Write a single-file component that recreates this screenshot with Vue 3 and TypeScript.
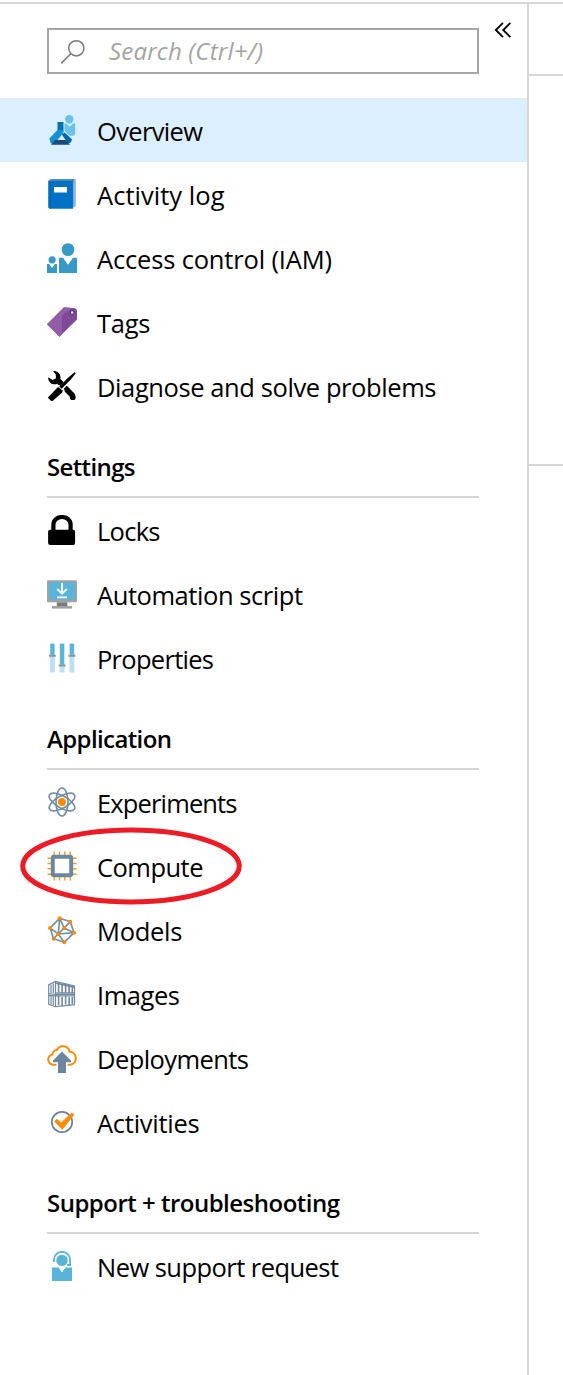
<script setup lang="ts">
import type { Directive } from 'vue'

interface MenuItem {
  icon: string
  label: string
  width: number
  active?: boolean
  circled?: boolean
}

interface MenuSection {
  title?: string
  width?: number
  items: MenuItem[]
}

const sections: MenuSection[] = [
  {
    items: [
      { icon: 'overview', label: 'Overview', width: 106, active: true },
      { icon: 'log', label: 'Activity log', width: 127.5 },
      { icon: 'iam', label: 'Access control (IAM)', width: 235 },
      { icon: 'tag', label: 'Tags', width: 53.5 },
      { icon: 'tools', label: 'Diagnose and solve problems', width: 339.5 },
    ],
  },
  {
    title: 'Settings',
    width: 88.5,
    items: [
      { icon: 'lock', label: 'Locks', width: 63.5 },
      { icon: 'script', label: 'Automation script', width: 206 },
      { icon: 'sliders', label: 'Properties', width: 117 },
    ],
  },
  {
    title: 'Application',
    width: 125,
    items: [
      { icon: 'atom', label: 'Experiments', width: 140.5 },
      { icon: 'chip', label: 'Compute', width: 106.5, circled: true },
      { icon: 'graph', label: 'Models', width: 85.3 },
      { icon: 'containers', label: 'Images', width: 83 },
      { icon: 'cloud', label: 'Deployments', width: 152 },
      { icon: 'check', label: 'Activities', width: 102.7 },
    ],
  },
  {
    title: 'Support + troubleshooting',
    width: 293,
    items: [{ icon: 'support', label: 'New support request', width: 242 }],
  },
]

// Spreads the letters of a label so that it fills the given width.
const vFit: Directive<HTMLElement, number> = {
  mounted(el, { value }) {
    const gaps = Math.max(1, (el.textContent ?? '').trim().length - 1)
    const natural = el.getBoundingClientRect().width
    el.style.letterSpacing = `${((value - natural) / gaps).toFixed(3)}px`
  },
}
</script>

<template>
  <div class="page">
    <aside class="sidebar">
      <div class="top">
        <div class="search">
          <svg class="glass" viewBox="0 0 26 26" fill="none" stroke="#7d7d7d" stroke-width="1.6">
            <circle cx="16.3" cy="9.3" r="7.6" />
            <path d="M10.8 14.8 1.2 24.4" />
          </svg>
          <span v-fit="154" class="placeholder">Search (Ctrl+/)</span>
        </div>
        <svg class="collapse" viewBox="0 0 18 18" fill="none" stroke="#000" stroke-width="1.8">
          <path d="M9 1.8 1.8 9 9 16.2M16.4 1.8 9.2 9l7.2 7.2" />
        </svg>
      </div>

      <nav>
        <section v-for="(section, i) in sections" :key="i">
          <h2 v-if="section.title" class="heading"><span v-fit="section.width ?? 0">{{ section.title }}</span></h2>
          <div v-for="item in section.items" :key="item.label" class="item" :class="{ active: item.active }">
            <svg class="icon" viewBox="0 0 30 30">
              <g v-if="item.icon === 'overview'">
                <circle cx="22.3" cy="4.3" r="4.2" fill="#6cc3ea" />
                <path d="M17.5 8.6h1.8l3.2 3.2 3.4-3.2h2.3V19l-1.6 1.7h-4l-5.1-5z" fill="#6cc3ea" />
                <path d="M10.5 7h6v9l-3 2-3-2z" fill="#0072b0" />
                <path d="M10.6 14.8 2.3 23.4l1.3 4.8L7 29.3l9.5-11.5V15z" fill="#1493d2" />
                <path d="m14.8 19.4 3-1.8 7.3 6.8-1.6 3.4-2.5.8z" fill="#0069aa" />
                <path d="m8 24.9h10.8l4.2 4.8H4z" fill="#194a80" />
              </g>
              <g v-else-if="item.icon === 'log'">
                <path d="M3.5.2h25.3v27l-1.6 1H4z" fill="#8ab6df" />
                <path d="M1.2 2 3.2.4h24v1.2H3.8z" fill="#00539b" />
                <path d="M1.2 2h24.9v27.8H2.5L1.2 28.5z" fill="#0072c6" />
                <path d="M3.3 2v27.8" stroke="#0062ad" stroke-width=".8" />
                <path d="M7 8h13v5.5H7z" fill="#fff" />
              </g>
              <g v-else-if="item.icon === 'iam'" fill="#3999c6">
                <circle cx="21" cy="6.6" r="6.4" />
                <path d="M12 14.7h4l5 7 5-7h4V30H12z" />
                <circle cx="5.1" cy="16.8" r="3.6" />
                <path d="M0 20.9h2.2L5 25l2.9-4.1H10V30H0z" />
              </g>
              <g v-else-if="item.icon === 'tag'">
                <path d="M17 .2 28 1.2 30 3.3v9.3L12.4 29.8 0 17.3z" fill="#804998" />
                <path d="M17 .2 24.7.9 15 8.5v18.7l-2.6 2.6L0 17.3z" fill="#9663ad" opacity=".8" />
                <circle cx="25.2" cy="5.5" r="1.9" fill="#fff" stroke="#56246e" stroke-width="1.1" />
              </g>
              <g v-else-if="item.icon === 'tools'">
                <path d="m11.5 10 14.8 15.4" stroke="#000" stroke-width="5.6" />
                <circle cx="25.8" cy="26.2" r="2.9" />
                <path d="M6 0c4.3-.4 7.7 2.7 7.5 6.7l-.4 3.2-3.8 3.3C4.9 14.1 1 11 1.2 6.3L5.6 9.1 9 7.2 8.7 3.3z" />
                <path d="M7.5 24.2 15 16.6" stroke="#fff" stroke-width="8" />
                <path d="m.8 26.7 9.7-10.2 2.1-.5L16 19l-.8 2.5-9.7 8.4H4.2z" />
                <path d="M13.6 17.8 20 11" stroke="#fff" stroke-width="4.6" />
                <path d="m12.3 15.4 9.3-9.2 6-5 1.3.9-4.8 6.1-9.5 9.5z" />
              </g>
              <g v-else-if="item.icon === 'lock'">
                <path d="M6.4 17V9.4a8.6 7.4 0 0 1 17.2 0V17" fill="none" stroke="#000" stroke-width="4.2" />
                <rect x="1.1" y="14.8" width="27" height="15.1" rx="2" />
              </g>
              <g v-else-if="item.icon === 'script'">
                <rect y="1.3" width="30" height="22" rx="1.2" fill="#a0a1a2" />
                <path d="M2 3.2h26v17.2H2z" fill="#59b4d9" />
                <path d="M9.8 23.3h10.6V27H9.8z" fill="#7a7a7a" />
                <path d="M5 27h20v2.6H5z" fill="#a0a1a2" />
                <path d="M15 4v10.7M10.2 10l4.8 4.8 4.8-4.8M10 18.3h10" fill="none" stroke="#fff" stroke-width="1.8" />
              </g>
              <g v-else-if="item.icon === 'sliders'">
                <path d="M2.9.4h5v29.2h-5zM12.6.4h5v29.2h-5zM22.4.4h5v29.2h-5z" fill="#bfe1ef" />
                <path d="M3.4.8h4v11h-4zM13.1.8h4v21h-4zM22.9.8h4v11h-4z" fill="#59b4d9" />
                <path d="M2 11.7h6.8v2.1H2zM11.7 21.5h6.8v2.1h-6.8zM21.5 11.7h6.8v2.1h-6.8z" fill="#8d959a" />
              </g>
              <g v-else-if="item.icon === 'atom'" fill="none" stroke="#6f8ba5" stroke-width="1.6">
                <ellipse cx="15" cy="15" rx="6" ry="14" />
                <ellipse cx="15" cy="15" rx="6" ry="14.4" transform="rotate(60 15 15)" />
                <ellipse cx="15" cy="15" rx="6" ry="14.4" transform="rotate(-60 15 15)" />
                <circle cx="15" cy="15" r="4" fill="#ff8c00" stroke="none" />
              </g>
              <g v-else-if="item.icon === 'chip'">
                <path
                  d="M7.2.5v29M12.5.5v29M17.8.5v29M23.2.5v29M.5 7.2h29M.5 12.5h29M.5 17.8h29M.5 23.2h29"
                  stroke="#ff9a1f"
                  stroke-width="1.4"
                />
                <rect x="5.8" y="5.8" width="18.4" height="18.4" rx="1" fill="#fff" stroke="#6c869f" stroke-width="3.9" />
              </g>
              <g v-else-if="item.icon === 'graph'">
                <path
                  d="M12.7 3.3 23.3 6.7 27 17.7 17.3 27.3 6.7 23.7 3 13zM12.7 3.3 11.3 19 23.3 6.7M12.7 3.3l4.6 9.7 9.7 4.7-15.7 1.3L3 13M6.7 23.7l4.6-4.7 6 8.3"
                  fill="none"
                  stroke="#7890a6"
                  stroke-width="1.7"
                />
                <g fill="#ff8c00">
                  <circle cx="12.7" cy="3.3" r="2" /><circle cx="23.3" cy="6.7" r="2" />
                  <circle cx="3" cy="13" r="2" /><circle cx="17.3" cy="13" r="2" />
                  <circle cx="27" cy="17.7" r="2" /><circle cx="11.3" cy="19" r="2" />
                  <circle cx="6.7" cy="23.7" r="2" /><circle cx="17.3" cy="27.3" r="2" />
                </g>
              </g>
              <g v-else-if="item.icon === 'containers'" fill="none" stroke="#72899e" stroke-width="1.2">
                <path d="M1.7 5.8 8.5 2.5 27.5 7v18.7l-18.9 2-6.9-2.4zM8.5 2.5v25.2M1.7 14.6l6.9.9 18.9-.2M1.7 16.4l6.9.4 18.9.1" />
                <path d="M9.2 4.2 27 8.2M9.2 14h18" stroke-width="1.7" />
                <path d="M4 5.5v8.4M6.3 4.4v9.8M4 17v8.2M6.3 17v9" stroke-width="1.2" />
                <path
                  d="M11.6 3.4v9.6M15.1 5v9M18.6 5.2v8.6M22.1 6v8M25.3 7v7M11.6 17v9M15.1 18v9M18.6 17v8.5M22.1 18v8M25.3 18v7"
                  stroke-width="1.6"
                />
              </g>
              <g v-else-if="item.icon === 'cloud'">
                <path
                  d="M9.5 21.7H6.2a5.2 5.2 0 0 1-.7-10.3 4.3 4.3 0 0 1 4.3-4.3A6.7 6.7 0 0 1 22.5 8.8a6.5 6.5 0 0 1 1 12.9h-3"
                  fill="none"
                  stroke="#ff8c00"
                  stroke-width="2"
                />
                <path d="m15 8.5 9 9v1.8h-5V30h-8V19.3H6v-1.8z" fill="#6c869f" />
              </g>
              <g v-else-if="item.icon === 'check'">
                <circle cx="15" cy="15" r="10.2" fill="none" stroke="#6c869f" stroke-width="1.8" />
                <path d="m7.2 14.5 2.7-2.7 4.3 3.7L24.5 5.8l3.2 1.4L15.4 22.7z" fill="#ff8c00" />
              </g>
              <g v-else-if="item.icon === 'support'" fill="#59b4d9">
                <circle cx="15" cy="9.4" r="5.7" />
                <path d="M6.9 11V8.8a8.1 8 0 0 1 16.2 0V14h-3" fill="none" stroke="#59b4d9" stroke-width="1.8" />
                <path d="M5 16.4h6.6l3.4 5 3.4-5H25V30H5z" />
              </g>
            </svg>
            <span v-fit="item.width" class="label">{{ item.label }}</span>
            <svg v-if="item.circled" class="mark" viewBox="0 0 222 78">
              <ellipse cx="111" cy="39" rx="108.3" ry="36" fill="none" stroke="#ed1c24" stroke-width="5" />
            </svg>
          </div>
        </section>
      </nav>
    </aside>
    <main class="content">
      <div class="band toolbar"></div>
      <div class="band essentials"></div>
    </main>
  </div>
</template>

<style>
body {
  margin: 0;
  background: #fff;
}
</style>

<style scoped>
.page {
  box-sizing: border-box;
  width: 563px;
  height: 1375px;
  padding-top: 2px;
  display: flex;
  overflow: hidden;
  color: #000;
  font-family: "Open Sans", "Noto Sans", sans-serif;
}

.sidebar {
  box-sizing: border-box;
  width: 529px;
  border-top: 2px solid #d6d6d6;
  border-right: 2px solid #d6d6d6;
}

.content {
  flex: 1;
  border-top: 2px solid #d6d6d6;
}

.band {
  box-sizing: border-box;
  border-bottom: 2px solid #d6d6d6;
}

.toolbar {
  height: 72px;
}

.essentials {
  height: 390px;
}

.top {
  box-sizing: border-box;
  height: 94px;
  padding: 24px 0 0 47px;
  display: flex;
  align-items: flex-start;
}

.search {
  box-sizing: border-box;
  width: 432px;
  height: 46px;
  padding-left: 12px;
  border: 2px solid #a6a6a6;
  display: flex;
  align-items: center;
}

.glass {
  width: 26px;
  height: 26px;
  margin: 1px 0 0 -1px;
}

.placeholder {
  margin: -1px 0 0 23px;
  color: #a3a3a3;
  font-size: 24px;
  line-height: 40px;
  font-style: italic;
  white-space: nowrap;
}

.collapse {
  width: 18px;
  height: 18px;
  margin: -7px 0 0 15px;
}

.heading {
  box-sizing: border-box;
  height: 80px;
  margin: 0 48px 0 47px;
  padding-top: 29px;
  border-bottom: 2px solid #d6d6d6;
  font-size: 24px;
  line-height: 40px;
  font-weight: 600;
  white-space: nowrap;
}

.item {
  position: relative;
  height: 64px;
  padding-left: 47px;
  display: flex;
  align-items: center;
}

.item.active {
  background: #dcefff;
}

.icon {
  width: 30px;
  height: 30px;
  flex: none;
}

.label {
  margin: 1px 0 0 20px;
  font-size: 25.5px;
  line-height: 40px;
  white-space: nowrap;
}

.mark {
  position: absolute;
  left: 20px;
  top: -7.5px;
  width: 222px;
  height: 78px;
}
</style>
